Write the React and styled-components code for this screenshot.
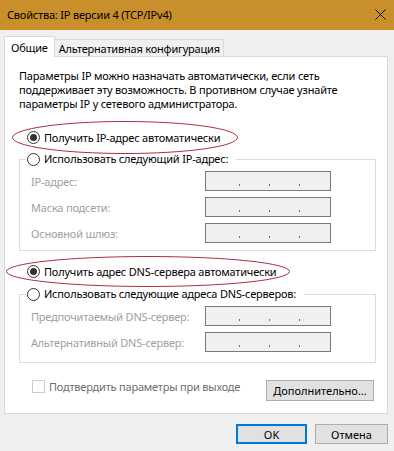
import styled, { createGlobalStyle } from "styled-components"

const GlobalStyle = createGlobalStyle`
  html, body {
    margin: 0;
    padding: 0;
    background: #f0f0f0;
  }
  body {
    font-family: "Noto Sans", "Open Sans", sans-serif;
    font-size: 11px;
    letter-spacing: -0.2px;
    color: #000;
  }
`

const Window = styled.div`
  width: 394px;
  height: 451px;
  background: #f0f0f0;
  display: flex;
  flex-direction: column;
  overflow: hidden;
`

const TitleBar = styled.div`
  height: 30px;
  flex: none;
  background: #c98f2b;
  display: flex;
  align-items: center;
  justify-content: space-between;
  padding: 0 8px 2px 7px;
  box-sizing: border-box;
`

const Title = styled.span`
  font-size: 11px;
`

const Body = styled.div`
  padding: 6px 6px 0 4px;
  display: flex;
  flex-direction: column;
`

const Tabs = styled.div`
  display: flex;
  align-items: flex-end;
  height: 20px;
  position: relative;
  z-index: 1;
`

const Tab = styled.div`
  box-sizing: border-box;
  border: 1px solid #d9d9d9;
  border-bottom: none;
  border-left: ${(p) => (p.$active ? "1px solid #d9d9d9" : "none")};
  background: ${(p) => (p.$active ? "#fff" : "#f0f0f0")};
  height: ${(p) => (p.$active ? "21px" : "17px")};
  margin-bottom: ${(p) => (p.$active ? "-1px" : "0")};
  padding: ${(p) => (p.$active ? "1px 6px 0 6px" : "0 3px 0 4px")};
  display: flex;
  align-items: center;
`

const Panel = styled.div`
  box-sizing: border-box;
  height: 358px;
  background: #fff;
  border: 1px solid #d9d9d9;
  padding: 12px 11px 0 14px;
  display: flex;
  flex-direction: column;
`

const Description = styled.p`
  margin: 0;
  line-height: 14px;
`

const RadioRow = styled.label`
  position: relative;
  display: flex;
  align-items: center;
  gap: 4px;
  height: 14px;
  margin-top: ${(p) => p.$top};
  padding-left: 8px;
`

const RadioCircle = styled.span`
  box-sizing: border-box;
  width: 13px;
  height: 13px;
  border: 1px solid #333;
  border-radius: 50%;
  background: #fff;
  display: flex;
  align-items: center;
  justify-content: center;
  flex: none;

  &::after {
    content: "";
    width: 7px;
    height: 7px;
    border-radius: 50%;
    background: ${(p) => (p.$checked ? "#333" : "transparent")};
  }
`

const Annotation = styled.svg`
  position: absolute;
  overflow: visible;
  pointer-events: none;
`

const Group = styled.fieldset`
  margin: ${(p) => p.$top} 0 0 0;
  padding: 0 11px ${(p) => p.$bottom} 11px;
  border: 1px solid #dcdcdc;
  min-width: 0;
  display: flex;
  flex-direction: column;
  gap: 6px;
`

const Legend = styled.legend`
  padding: 0 8px 0 1px;
  margin-left: -5px;
  line-height: 14px;
  margin-bottom: 5px;
`

const LegendRow = styled.span`
  display: flex;
  align-items: center;
  gap: 4px;
`

const FieldRow = styled.div`
  display: flex;
  align-items: center;
  justify-content: space-between;
  height: 20px;
  padding-right: 33px;
`

const FieldLabel = styled.span`
  color: #a0a0a0;
`

const IpBox = styled.div`
  box-sizing: border-box;
  width: 126px;
  height: 20px;
  border: 1px solid #7a7a7a;
  background: #f0f0f0;
  display: flex;
  align-items: flex-end;
  padding: 0 0 4px 33px;
  gap: 29px;
`

const Dot = styled.span`
  width: 1px;
  height: 2px;
  background: #6d6d6d;
`

const Footer = styled.div`
  display: flex;
  align-items: flex-start;
  justify-content: space-between;
  margin: 17px 0 0 13px;
  padding-right: 2px;
`

const Check = styled.label`
  display: flex;
  align-items: center;
  gap: 4px;
  height: 13px;
  color: #6d6d6d;
`

const CheckBox = styled.span`
  box-sizing: border-box;
  width: 13px;
  height: 13px;
  border: 1px solid #cccccc;
  background: #fff;
`

const Button = styled.button`
  box-sizing: border-box;
  font: inherit;
  color: #000;
  height: ${(p) => p.$height};
  width: ${(p) => p.$width};
  background: #e1e1e1;
  border: ${(p) => (p.$primary ? "2px solid #0078d7" : "1px solid #adadad")};
  padding: 0;
  display: flex;
  align-items: center;
  justify-content: center;
`

const Actions = styled.div`
  display: flex;
  justify-content: flex-end;
  gap: 8px;
  margin-top: 10px;
`

const Ellipse = ({ left, top, width, height }) => (
  <Annotation
    style={{ left, top, width, height }}
    viewBox={`0 0 ${width} ${height}`}
  >
    <ellipse
      cx={width / 2}
      cy={height / 2}
      rx={width / 2 - 0.5}
      ry={height / 2 - 0.5}
      fill="none"
      stroke="#a8323c"
      strokeWidth="1"
    />
  </Annotation>
)

const IpField = ({ label }) => (
  <FieldRow>
    <FieldLabel>{label}</FieldLabel>
    <IpBox>
      <Dot />
      <Dot />
      <Dot />
    </IpBox>
  </FieldRow>
)

const App = () => {
  return (
    <Window>
      <GlobalStyle />
      <TitleBar>
        <Title>Свойства: IP версии 4 (TCP/IPv4)</Title>
        <svg width="11" height="11" viewBox="0 0 11 11">
          <path d="M0.5 0.5 L10.5 10.5 M10.5 0.5 L0.5 10.5" stroke="#000" strokeWidth="1" />
        </svg>
      </TitleBar>
      <Body>
        <Tabs>
          <Tab $active>Общие</Tab>
          <Tab>Альтернативная конфигурация</Tab>
        </Tabs>
        <Panel>
          <Description>
            Параметры IP можно назначать автоматически, если сеть
            <br />
            поддерживает эту возможность. В противном случае узнайте
            <br />
            параметры IP у сетевого администратора.
          </Description>

          <RadioRow $top="19px">
            <Ellipse left={-7} top={-9} width={226} height={33} />
            <RadioCircle $checked />
            Получить IP-адрес автоматически
          </RadioRow>

          <Group $top="8px" $bottom="7px">
            <Legend>
              <LegendRow>
                <RadioCircle />
                Использовать следующий IP-адрес:
              </LegendRow>
            </Legend>
            <IpField label="IP-адрес:" />
            <IpField label="Маска подсети:" />
            <IpField label="Основной шлюз:" />
          </Group>

          <RadioRow $top="13px">
            <Ellipse left={-13} top={-8} width={284} height={31} />
            <RadioCircle $checked />
            Получить адрес DNS-сервера автоматически
          </RadioRow>

          <Group $top="9px" $bottom="10px">
            <Legend>
              <LegendRow>
                <RadioCircle />
                Использовать следующие адреса DNS-серверов:
              </LegendRow>
            </Legend>
            <IpField label="Предпочитаемый DNS-сервер:" />
            <IpField label="Альтернативный DNS-сервер:" />
          </Group>

          <Footer>
            <Check>
              <CheckBox />
              Подтвердить параметры при выходе
            </Check>
            <Button $width="108px" $height="21px">Дополнительно...</Button>
          </Footer>
        </Panel>
        <Actions>
          <Button $primary $width="71px" $height="20px">OK</Button>
          <Button $width="73px" $height="20px">Отмена</Button>
        </Actions>
      </Body>
    </Window>
  )
}

export default App
